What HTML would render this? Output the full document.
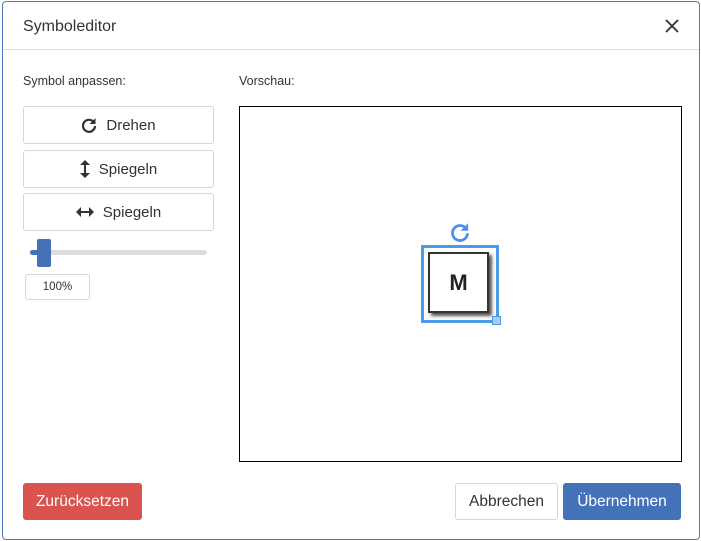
<!DOCTYPE html>
<html><head><style>
*{box-sizing:border-box;margin:0;padding:0}
body{width:701px;height:541px;background:#fff;font-family:"Liberation Sans",sans-serif;color:#333;position:relative;overflow:hidden}
.dlg{position:absolute;left:2px;top:1px;width:698px;height:539px;border:1px solid #4a7cc0;border-radius:4px}
.abs{position:absolute}
.hdr{left:3px;top:49px;width:696px;height:1px;background:#dedede}
.btn{position:absolute;border:1px solid #d6d6d6;border-radius:3px;background:#fff;font-size:15px;display:flex;align-items:center;justify-content:center;color:#333}
.btn svg{margin-right:9px}
</style></head><body>
<div class="dlg"></div>
<div class="abs" style="left:23px;top:18px;font-size:16px;color:#333">Symboleditor</div>
<svg class="abs" style="left:665px;top:19px" width="14" height="14"><path d="M1 1L13 13M13 1L1 13" stroke="#333" stroke-width="1.8"/></svg>
<div class="abs hdr"></div>
<div class="abs" style="left:23px;top:74px;font-size:12.5px">Symbol anpassen:</div>
<div class="abs" style="left:239px;top:74px;font-size:12.5px">Vorschau:</div>
<div class="btn" style="left:23px;top:106px;width:191px;height:38px"><svg width="16" height="16" viewBox="0 0 16 16"><path d="M13 5.5A6 6 0 1 0 14 9" fill="none" stroke="#333" stroke-width="2.2"/><path d="M14.5 1V7H8.5Z" fill="#333"/></svg>Drehen</div>
<div class="btn" style="left:23px;top:150px;width:191px;height:38px"><svg width="10" height="18" viewBox="0 0 10 18"><path d="M5 2V16" stroke="#333" stroke-width="2"/><path d="M0 5L5 0L10 5ZM0 13L5 18L10 13Z" fill="#333"/></svg>Spiegeln</div>
<div class="btn" style="left:23px;top:193px;width:191px;height:38px"><svg width="18" height="10" viewBox="0 0 18 10"><path d="M2 5H16" stroke="#333" stroke-width="2"/><path d="M5 0L0 5L5 10ZM13 0L18 5L13 10Z" fill="#333"/></svg>Spiegeln</div>
<div class="abs" style="left:30px;top:250px;width:177px;height:5px;background:#ddd;border-radius:3px"></div>
<div class="abs" style="left:30px;top:250px;width:10px;height:5px;background:#4472b8;border-radius:3px"></div>
<div class="abs" style="left:37px;top:239px;width:14px;height:28px;background:#4472b8;border-radius:2px"></div>
<div class="abs" style="left:25px;top:274px;width:65px;height:26px;border:1px solid #d6d6d6;border-radius:3px;font-size:11.5px;display:flex;align-items:center;justify-content:center;background:#fff">100%</div>
<div class="abs" style="left:239px;top:106px;width:443px;height:356px;border:1px solid #000"></div>
<svg class="abs" style="left:450px;top:222px" width="20" height="20" viewBox="0 0 16 16"><path d="M13 5.5A6 6 0 1 0 14 9" fill="none" stroke="#4a8ef0" stroke-width="2.2"/><path d="M14.5 1V7H8.5Z" fill="#4a8ef0"/></svg>
<div class="abs" style="left:421px;top:245px;width:78px;height:78px;border:3px solid #4a9be8"></div>
<div class="abs" style="left:428px;top:252px;width:61px;height:61px;border:2px solid #333;background:#fff;box-shadow:3px 3px 3px #555;display:flex;align-items:center;justify-content:center;font-weight:bold;font-size:22px;color:#222">M</div>
<div class="abs" style="left:492px;top:316px;width:9px;height:9px;background:#a8cdf0;border:1px solid #4a9be8"></div>
<div class="btn" style="left:23px;top:483px;width:119px;height:37px;background:#d9534f;border-color:#d9534f;color:#fff;font-size:15.5px">Zurücksetzen</div>
<div class="btn" style="left:455px;top:483px;width:103px;height:37px;font-size:15.5px">Abbrechen</div>
<div class="btn" style="left:563px;top:483px;width:118px;height:37px;background:#4472b8;border-color:#4472b8;color:#fff;font-size:15.5px">Übernehmen</div>
</body></html>
